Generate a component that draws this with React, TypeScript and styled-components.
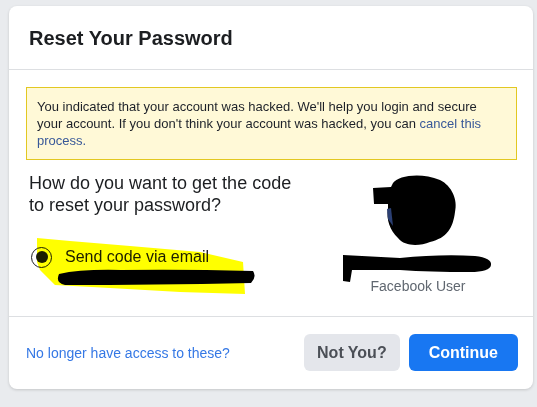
import React from "react";
import styled, { createGlobalStyle } from "styled-components";

const GlobalStyle = createGlobalStyle`
  html, body { margin: 0; padding: 0; background: #e9ebee; }
  body { font-family: "Liberation Sans", Arial, Helvetica, sans-serif; color: #1d2129; }
  * { box-sizing: border-box; }
`;

const Page = styled.div`
  width: 537px;
  height: 407px;
  padding: 6px 4px 0 9px;
`;

const Card = styled.div`
  width: 524px;
  background: #fff;
  border-radius: 8px;
  box-shadow: 0 1px 3px rgba(0, 0, 0, 0.16);
  overflow: hidden;
  isolation: isolate;
`;

const Header = styled.div`
  height: 64px;
  display: flex;
  align-items: center;
  padding: 2px 20px 0;
  border-bottom: 1px solid #dddfe2;
`;

const Title = styled.h2`
  margin: 0;
  font-size: 20px;
  font-weight: bold;
  color: #1c1e21;
`;

const Body = styled.div`
  padding: 17px 16px 22px 17px;
`;

const Notice = styled.div`
  background: #fff9d7;
  border: 1px solid #e2c822;
  padding: 10px 24px 10px 10px;
  font-size: 13px;
  line-height: 17px;
  color: #1d2129;
`;

const InlineLink = styled.a`
  color: #385898;
  text-decoration: none;
`;

const Content = styled.div`
  display: flex;
  margin-top: 12px;
`;

const Left = styled.div`
  flex: 1;
  padding-left: 3px;
`;

const Question = styled.div`
  font-size: 18px;
  line-height: 22px;
  color: #1c1e21;
  width: 270px;
`;

const Option = styled.label`
  position: relative;
  display: flex;
  align-items: center;
  gap: 13px;
  height: 20px;
  margin-top: 31px;
  margin-left: 2px;
  font-size: 16px;
  color: #1c1e21;
`;

const Radio = styled.span`
  width: 21px;
  height: 21px;
  border-radius: 50%;
  border: 1.5px solid #1c1e21;
  background: #fff;
  display: flex;
  align-items: center;
  justify-content: center;
  flex: none;
  &::after {
    content: "";
    width: 12px;
    height: 12px;
    border-radius: 50%;
    background: #1c1e21;
  }
`;

const Marks = styled.svg`
  position: absolute;
  left: 0;
  top: -12px;
  overflow: visible;
  mix-blend-mode: multiply;
  pointer-events: none;
`;

const Right = styled.div`
  width: 180px;
  margin-right: 9px;
  display: flex;
  flex-direction: column;
  align-items: center;
`;

const Drawing = styled.svg<{ $gap?: number }>`
  display: block;
  overflow: visible;
  margin-top: ${(p) => p.$gap ?? 0}px;
`;

const Caption = styled.div`
  font-size: 14px;
  line-height: 16px;
  color: #606770;
`;

const Footer = styled.div`
  display: flex;
  align-items: center;
  gap: 9px;
  padding: 17px 15px 18px 17px;
  border-top: 1px solid #dddfe2;
`;

const FooterLink = styled.a`
  flex: 1;
  font-size: 14px;
  color: #3578e5;
  text-decoration: none;
`;

const Button = styled.button<{ $primary?: boolean; $pad: number }>`
  height: 37px;
  padding: 0 ${(p) => p.$pad}px;
  border: none;
  border-radius: 6px;
  font-family: inherit;
  font-size: 16px;
  font-weight: bold;
  background: ${(p) => (p.$primary ? "#1877f2" : "#e4e6eb")};
  color: ${(p) => (p.$primary ? "#fff" : "#4b4f56")};
`;

export default function App() {
  return (
    <>
      <GlobalStyle />
      <Page>
        <Card>
          <Header>
            <Title>Reset Your Password</Title>
          </Header>
          <Body>
            <Notice>
              You indicated that your account was hacked. We'll help you login and secure your
              account. If you don't think your account was hacked, you can{" "}
              <InlineLink href="#">cancel this process.</InlineLink>
            </Notice>
            <Content>
              <Left>
                <Question>How do you want to get the code to reset your password?</Question>
                <Option>
                  <Radio />
                  Send code via email
                  <Marks width="230" height="64" viewBox="0 -12 230 64">
                    <path
                      d="M6 -9 L39 -6 L99 -1 L169 5 L212 15 L214 47 L149 45 L79 41 L24 38 L9 23 L6 15 Z"
                      fill="#ffff00"
                    />
                    <path
                      d="M28 27 Q24 36 34 38 Q120 38 220 36 Q226 30 222 24 Q150 22 90 23 Q50 22 28 27 Z"
                      fill="#000"
                    />
                  </Marks>
                </Option>
              </Left>
              <Right>
                <Drawing width="100" height="76" viewBox="368 172 100 76">
                  <path
                    d="M393 183 C398 176 420 172 440 180 C452 186 458 200 455 212 C453 228 447 238 430 242 C420 246 405 247 398 238 C390 230 386 220 388 208 L388 204 L374 204 L373 188 L391 187 Z"
                    fill="#000"
                  />
                  <path d="M387 209 L391 208 L393 226 L388 219 Z" fill="#2b3f73" />
                </Drawing>
                <Drawing $gap={5} width="160" height="25" viewBox="338 253 160 25">
                  <path
                    d="M343 255 L400 258 Q440 254 475 256 Q492 258 491 265 Q490 272 470 272 Q430 272 400 270 L352 270 L350 282 L343 281 Z"
                    fill="#000"
                  />
                </Drawing>
                <Caption>Facebook User</Caption>
              </Right>
            </Content>
          </Body>
          <Footer>
            <FooterLink href="#">No longer have access to these?</FooterLink>
            <Button $pad={13}>Not You?</Button>
            <Button $primary $pad={20}>Continue</Button>
          </Footer>
        </Card>
      </Page>
    </>
  );
}
